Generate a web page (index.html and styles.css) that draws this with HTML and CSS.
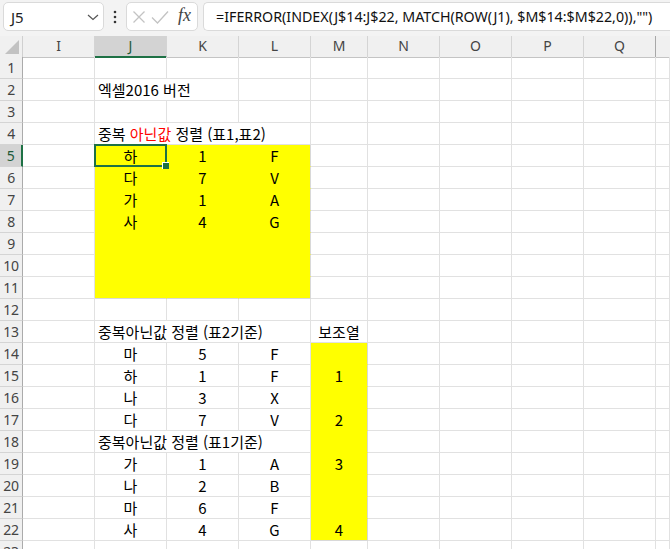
FILE: index.html
```html
<!DOCTYPE html>
<html lang="ko">
<head>
<meta charset="utf-8">
<title>Excel</title>
<link rel="stylesheet" href="styles.css">
</head>
<body>
<div class="app">
  <div class="fbar">
    <div class="namebox">
      <span class="nb-text">J5</span>
      <svg class="chev" width="12" height="7" viewBox="0 0 12 7"><path d="M1 1 L6 5.5 L11 1" fill="none" stroke="#555" stroke-width="1.2"/></svg>
    </div>
    <div class="dots">
      <svg width="4" height="14" viewBox="0 0 4 14"><circle cx="2" cy="2" r="1.3" fill="#333"/><circle cx="2" cy="7" r="1.3" fill="#333"/><circle cx="2" cy="12" r="1.3" fill="#333"/></svg>
    </div>
    <div class="btns">
      <svg class="ico" width="14" height="14" viewBox="0 0 14 14"><path d="M1.5 1.5 L12.5 12.5 M12.5 1.5 L1.5 12.5" fill="none" stroke="#c3c3c3" stroke-width="1.3"/></svg>
      <svg class="ico" width="18" height="14" viewBox="0 0 18 14"><path d="M1 7.5 L6.5 13 L17 1.5" fill="none" stroke="#c3c3c3" stroke-width="1.3"/></svg>
      <span class="fx">fx</span>
    </div>
    <div class="formula">=IFERROR(INDEX(J$14:J$22, MATCH(ROW(J1), $M$14:$M$22,0)),"")</div>
  </div>

  <div class="sheet">
    <div class="row hdr">
      <div class="corner"><svg width="16" height="16" viewBox="0 0 16 16"><path d="M15 1 L15 15 L1 15 Z" fill="#c2c2c2"/></svg></div>
      <div class="ch">I</div><div class="ch sel-c">J</div><div class="ch">K</div><div class="ch">L</div><div class="ch">M</div><div class="ch">N</div><div class="ch">O</div><div class="ch">P</div><div class="ch">Q</div><div class="ch last"></div>
    </div>

    <div class="row"><div class="rh">1</div><div class="c"></div><div class="c"></div><div class="c"></div><div class="c"></div><div class="c"></div><div class="c"></div><div class="c"></div><div class="c"></div><div class="c"></div><div class="c"></div></div>
    <div class="row"><div class="rh">2</div><div class="c"></div><div class="c sp2">엑셀2016 버전</div><div class="c"></div><div class="c"></div><div class="c"></div><div class="c"></div><div class="c"></div><div class="c"></div><div class="c"></div></div>
    <div class="row"><div class="rh">3</div><div class="c"></div><div class="c"></div><div class="c"></div><div class="c"></div><div class="c"></div><div class="c"></div><div class="c"></div><div class="c"></div><div class="c"></div><div class="c"></div></div>
    <div class="row"><div class="rh">4</div><div class="c"></div><div class="c sp3">중복 <span class="red">아닌값</span> 정렬 (표1,표2)</div><div class="c"></div><div class="c"></div><div class="c"></div><div class="c"></div><div class="c"></div><div class="c"></div></div>
    <div class="row"><div class="rh sel-r">5</div><div class="c"></div><div class="c y ctr active">하<span class="handle"></span></div><div class="c y ctr">1</div><div class="c y yr ctr">F</div><div class="c"></div><div class="c"></div><div class="c"></div><div class="c"></div><div class="c"></div><div class="c"></div></div>
    <div class="row"><div class="rh">6</div><div class="c"></div><div class="c y ctr">다</div><div class="c y ctr">7</div><div class="c y yr ctr">V</div><div class="c"></div><div class="c"></div><div class="c"></div><div class="c"></div><div class="c"></div><div class="c"></div></div>
    <div class="row"><div class="rh">7</div><div class="c"></div><div class="c y ctr">가</div><div class="c y ctr">1</div><div class="c y yr ctr">A</div><div class="c"></div><div class="c"></div><div class="c"></div><div class="c"></div><div class="c"></div><div class="c"></div></div>
    <div class="row"><div class="rh">8</div><div class="c"></div><div class="c y ctr">사</div><div class="c y ctr">4</div><div class="c y yr ctr">G</div><div class="c"></div><div class="c"></div><div class="c"></div><div class="c"></div><div class="c"></div><div class="c"></div></div>
    <div class="row"><div class="rh">9</div><div class="c"></div><div class="c y"></div><div class="c y"></div><div class="c y yr"></div><div class="c"></div><div class="c"></div><div class="c"></div><div class="c"></div><div class="c"></div><div class="c"></div></div>
    <div class="row"><div class="rh">10</div><div class="c"></div><div class="c y"></div><div class="c y"></div><div class="c y yr"></div><div class="c"></div><div class="c"></div><div class="c"></div><div class="c"></div><div class="c"></div><div class="c"></div></div>
    <div class="row"><div class="rh">11</div><div class="c"></div><div class="c y yb"></div><div class="c y yb"></div><div class="c y yr yb"></div><div class="c"></div><div class="c"></div><div class="c"></div><div class="c"></div><div class="c"></div><div class="c"></div></div>
    <div class="row"><div class="rh">12</div><div class="c"></div><div class="c"></div><div class="c"></div><div class="c"></div><div class="c"></div><div class="c"></div><div class="c"></div><div class="c"></div><div class="c"></div><div class="c"></div></div>
    <div class="row"><div class="rh">13</div><div class="c"></div><div class="c sp3">중복아닌값 정렬 (표2기준)</div><div class="c ctr">보조열</div><div class="c"></div><div class="c"></div><div class="c"></div><div class="c"></div><div class="c"></div></div>
    <div class="row"><div class="rh">14</div><div class="c"></div><div class="c ctr">마</div><div class="c ctr">5</div><div class="c ctr">F</div><div class="c y yr"></div><div class="c"></div><div class="c"></div><div class="c"></div><div class="c"></div><div class="c"></div></div>
    <div class="row"><div class="rh">15</div><div class="c"></div><div class="c ctr">하</div><div class="c ctr">1</div><div class="c ctr">F</div><div class="c y yr ctr">1</div><div class="c"></div><div class="c"></div><div class="c"></div><div class="c"></div><div class="c"></div></div>
    <div class="row"><div class="rh">16</div><div class="c"></div><div class="c ctr">나</div><div class="c ctr">3</div><div class="c ctr">X</div><div class="c y yr"></div><div class="c"></div><div class="c"></div><div class="c"></div><div class="c"></div><div class="c"></div></div>
    <div class="row"><div class="rh">17</div><div class="c"></div><div class="c ctr">다</div><div class="c ctr">7</div><div class="c ctr">V</div><div class="c y yr ctr">2</div><div class="c"></div><div class="c"></div><div class="c"></div><div class="c"></div><div class="c"></div></div>
    <div class="row"><div class="rh">18</div><div class="c"></div><div class="c sp3">중복아닌값 정렬 (표1기준)</div><div class="c y yr"></div><div class="c"></div><div class="c"></div><div class="c"></div><div class="c"></div><div class="c"></div></div>
    <div class="row"><div class="rh">19</div><div class="c"></div><div class="c ctr">가</div><div class="c ctr">1</div><div class="c ctr">A</div><div class="c y yr ctr">3</div><div class="c"></div><div class="c"></div><div class="c"></div><div class="c"></div><div class="c"></div></div>
    <div class="row"><div class="rh">20</div><div class="c"></div><div class="c ctr">나</div><div class="c ctr">2</div><div class="c ctr">B</div><div class="c y yr"></div><div class="c"></div><div class="c"></div><div class="c"></div><div class="c"></div><div class="c"></div></div>
    <div class="row"><div class="rh">21</div><div class="c"></div><div class="c ctr">마</div><div class="c ctr">6</div><div class="c ctr">F</div><div class="c y yr"></div><div class="c"></div><div class="c"></div><div class="c"></div><div class="c"></div><div class="c"></div></div>
    <div class="row"><div class="rh">22</div><div class="c"></div><div class="c ctr">사</div><div class="c ctr">4</div><div class="c ctr">G</div><div class="c y yr yb ctr">4</div><div class="c"></div><div class="c"></div><div class="c"></div><div class="c"></div><div class="c"></div></div>
    <div class="row"><div class="rh">23</div><div class="c"></div><div class="c"></div><div class="c"></div><div class="c"></div><div class="c"></div><div class="c"></div><div class="c"></div><div class="c"></div><div class="c"></div><div class="c"></div></div>
  </div>
</div>
</body>
</html>
```

FILE: styles.css
```css
* { box-sizing: border-box; }

body {
  margin: 0;
  background: #ffffff;
  font-family: "Noto Sans", "Noto Sans CJK KR", sans-serif;
  color: #000;
}

.app {
  width: 670px;
  height: 549px;
  overflow: hidden;
}

/* ---------- formula bar ---------- */
.fbar {
  height: 36px;
  background: #f3f3f3;
  display: flex;
  align-items: flex-start;
  padding: 2px 0 0 3px;
}

.namebox {
  width: 101px;
  height: 29px;
  background: #fff;
  border: 1px solid #dadada;
  border-radius: 5px;
  display: flex;
  align-items: center;
  justify-content: space-between;
  padding: 0 4px 0 7px;
}

.nb-text {
  font-size: 15px;
  color: #222;
}

.chev { margin-top: 1px; }

.dots {
  width: 22px;
  height: 29px;
  display: flex;
  align-items: center;
  justify-content: center;
}

.btns {
  width: 72px;
  height: 29px;
  background: #fff;
  border: 1px solid #dadada;
  border-radius: 5px;
  display: flex;
  align-items: center;
  padding-left: 5px;
  gap: 5px;
}

.fx {
  font-family: "Liberation Serif", "DejaVu Serif", serif;
  font-style: italic;
  font-size: 18px;
  color: #444;
  margin-left: 4px;
  margin-top: -2px;
}

.formula {
  margin-left: 5px;
  flex: 1;
  height: 29px;
  background: #fff;
  border: 1px solid #dadada;
  border-right: none;
  border-radius: 5px 0 0 5px;
  padding-left: 12px;
  font-size: 14.25px;
  line-height: 27px;
  white-space: nowrap;
  overflow: hidden;
  color: #111;
}

/* ---------- sheet ---------- */
.row {
  display: grid;
  grid-template-columns: 23px repeat(4, 72px) 57px repeat(4, 72px) 14px;
  height: 22px;
}

.row.hdr { height: 21px; }

.corner {
  background: #f0f0f0;
  border-right: 1px solid #d0d0d0;
  border-bottom: 1px solid #c4c4c4;
  display: flex;
  align-items: flex-end;
  justify-content: flex-end;
  padding: 0 2px 2px 0;
}

.ch {
  background: #f0f0f0;
  border-right: 1px solid #d4d4d4;
  border-bottom: 1px solid #c4c4c4;
  font-size: 14px;
  line-height: 20px;
  text-align: center;
  color: #444;
}

.ch.sel-c {
  background: #d3d3d3;
  border-bottom: 2px solid #1e7145;
  color: #1e5a3a;
}

.ch.last { border-right: none; }
.row.hdr .ch:nth-child(10) { border-right-color: #a8a8a8; }

.rh {
  background: #f0f0f0;
  border-right: 1px solid #ababab;
  border-bottom: 1px solid #d4d4d4;
  font-size: 14px;
  line-height: 21px;
  text-align: center;
  color: #444;
  letter-spacing: -0.3px;
}

.rh.sel-r {
  background: #d3d3d3;
  border-right: 2px solid #1e7145;
  color: #1e5a3a;
}

.c {
  border-right: 1px solid #e1e1e1;
  border-bottom: 1px solid #e1e1e1;
  font-family: "Noto Sans CJK KR", "Noto Sans", sans-serif;
  font-size: 15px;
  line-height: 21px;
  padding: 0 3px;
  white-space: nowrap;
  overflow: visible;
}

.ctr { text-align: center; }

.sp2 { grid-column: span 2; }
.sp3 { grid-column: span 3; }

.red { color: #ff0000; }

.y {
  background: #ffff00;
  border-right-color: #ffff00;
  border-bottom-color: #ffff00;
}

.y.yr { border-right-color: #d8d8d8; }
.y.yb { border-bottom-color: #d8d8d8; }

/* active cell selection frame (lies over the grid) */
.active { position: relative; }

.active::after {
  content: "";
  position: absolute;
  left: -1px;
  top: -1px;
  right: -1px;
  bottom: -1px;
  border: 2px solid #1e7145;
  pointer-events: none;
}

.handle {
  position: absolute;
  right: -3px;
  bottom: -3px;
  width: 7px;
  height: 7px;
  background: #1e7145;
  border-left: 1px solid #fff;
  border-top: 1px solid #fff;
  z-index: 2;
}
```
